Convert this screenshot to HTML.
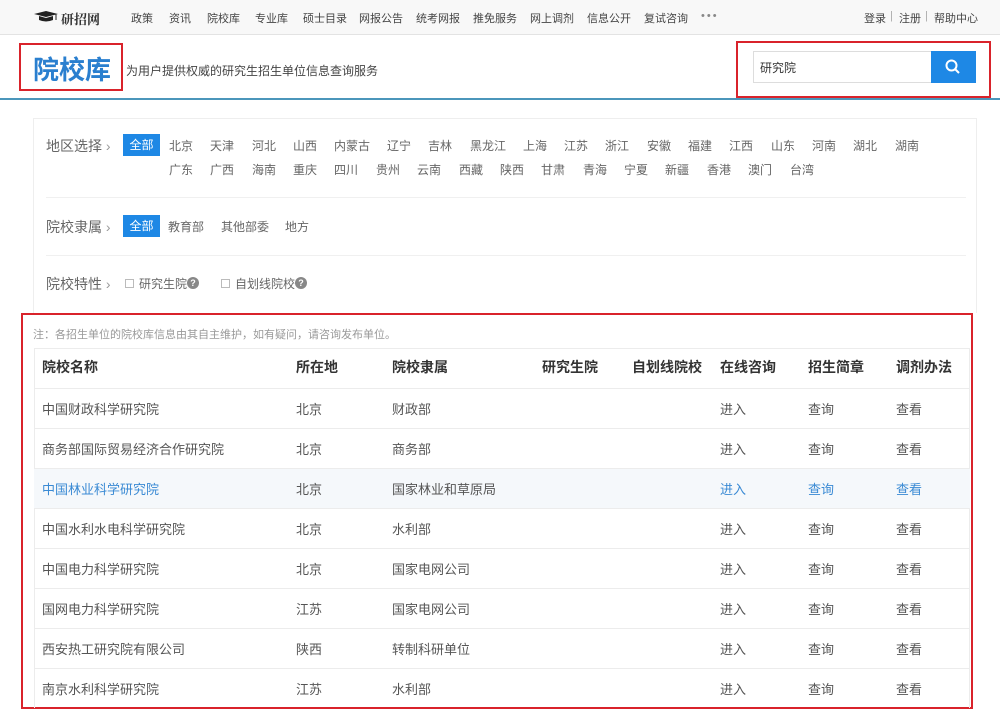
<!DOCTYPE html>
<html><head><meta charset="utf-8"><style>
*{margin:0;padding:0;box-sizing:border-box}
body{width:1000px;height:712px;overflow:hidden;background:#fff;font-family:"Liberation Sans","Noto Sans CJK SC",sans-serif;color:#333;position:relative}
.a{position:absolute;white-space:nowrap}
.nav{left:0;top:0;width:1000px;height:35px;background:#f8f8f8;border-bottom:1px solid #e3e3e3}
.nav span{position:absolute;top:10px;font-size:11px;color:#444}
.red{border:2px solid #d9232b}
.f{font-size:12px;color:#666}
.lbl{font-size:14px;color:#666}
.btn{background:#1e88e5;color:#fff;font-size:12px;text-align:center;line-height:22px}
.row{left:34px;width:936px;height:40px;border-top:1px solid #ececec}
.row span{position:absolute;top:10px;font-size:13px;color:#555}
.hi{background:#f5f8fb}
.hi span.b{color:#3a8ad4}
</style></head><body>
<div class="a nav">
  <svg class="a" style="left:34px;top:11px" width="24" height="12" viewBox="0 0 24 12"><path d="M0 3 L12 0 L24 3 L12 6Z" fill="#222"/><path d="M5 5 L5 9 Q12 12 19 9 L19 5 L12 7Z" fill="#222"/><path d="M22 3.5 V9" stroke="#222" stroke-width="1"/></svg>
  <span style="left:61px;top:9px;font-size:13px;font-weight:bold;color:#333;font-family:'Noto Serif CJK SC',serif">研招网</span>
  <span style="left:131px">政策</span><span style="left:169px">资讯</span><span style="left:207px">院校库</span><span style="left:255px">专业库</span><span style="left:303px">硕士目录</span><span style="left:359px">网报公告</span><span style="left:416px">统考网报</span><span style="left:473px">推免服务</span><span style="left:530px">网上调剂</span><span style="left:587px">信息公开</span><span style="left:644px">复试咨询</span><span style="left:701px;letter-spacing:2px;color:#888">•••</span>
  <span style="left:864px">登录</span><span style="left:890px;color:#aaa;top:10px">|</span><span style="left:899px">注册</span><span style="left:925px;color:#aaa;top:10px">|</span><span style="left:934px">帮助中心</span>
</div>
<div class="a red" style="left:19px;top:43px;width:104px;height:48px"></div>
<div class="a" style="left:33px;top:50px;font-size:26px;font-weight:bold;color:#2a7fcf">院校库</div>
<div class="a f" style="left:126px;top:62px;color:#444">为用户提供权威的研究生招生单位信息查询服务</div>
<div class="a red" style="left:736px;top:41px;width:255px;height:57px"></div>
<div class="a" style="left:753px;top:51px;width:179px;height:32px;border:1px solid #ddd"></div>
<div class="a" style="left:760px;top:59px;font-size:12px">研究院</div>
<div class="a" style="left:931px;top:51px;width:45px;height:32px;background:#1e88e5"></div>
<svg class="a" style="left:945px;top:59px" width="16" height="16" viewBox="0 0 16 16"><circle cx="6.5" cy="6.5" r="5" fill="none" stroke="#fff" stroke-width="2"/><path d="M10 10 L14 14" stroke="#fff" stroke-width="2"/></svg>
<div class="a" style="left:0;top:98px;width:1000px;height:2px;background:#4b96bb"></div>

<div class="a" style="left:33px;top:118px;width:944px;height:195px;border:1px solid #eee;border-bottom:none"></div>
<div class="a lbl" style="left:46px;top:136px">地区选择 <span style="color:#999">›</span></div>
<div class="a btn" style="left:123px;top:134px;width:37px">全部</div>
<div class="a f" style="left:169px;top:137px">
<span class="a" style="left:0">北京</span><span class="a" style="left:41px">天津</span><span class="a" style="left:83px">河北</span><span class="a" style="left:124px">山西</span><span class="a" style="left:165px">内蒙古</span><span class="a" style="left:218px">辽宁</span><span class="a" style="left:259px">吉林</span><span class="a" style="left:301px">黑龙江</span><span class="a" style="left:354px">上海</span><span class="a" style="left:395px">江苏</span><span class="a" style="left:436px">浙江</span><span class="a" style="left:478px">安徽</span><span class="a" style="left:519px">福建</span><span class="a" style="left:560px">江西</span><span class="a" style="left:602px">山东</span><span class="a" style="left:643px">河南</span><span class="a" style="left:684px">湖北</span><span class="a" style="left:726px">湖南</span>
<span class="a" style="left:0;top:24px">广东</span><span class="a" style="left:41px;top:24px">广西</span><span class="a" style="left:83px;top:24px">海南</span><span class="a" style="left:124px;top:24px">重庆</span><span class="a" style="left:165px;top:24px">四川</span><span class="a" style="left:207px;top:24px">贵州</span><span class="a" style="left:248px;top:24px">云南</span><span class="a" style="left:290px;top:24px">西藏</span><span class="a" style="left:331px;top:24px">陕西</span><span class="a" style="left:372px;top:24px">甘肃</span><span class="a" style="left:414px;top:24px">青海</span><span class="a" style="left:455px;top:24px">宁夏</span><span class="a" style="left:496px;top:24px">新疆</span><span class="a" style="left:538px;top:24px">香港</span><span class="a" style="left:579px;top:24px">澳门</span><span class="a" style="left:621px;top:24px">台湾</span>
</div>
<div class="a" style="left:46px;top:197px;width:920px;height:1px;background:#f0f0f0"></div>
<div class="a lbl" style="left:46px;top:217px">院校隶属 <span style="color:#999">›</span></div>
<div class="a btn" style="left:123px;top:215px;width:37px">全部</div>
<div class="a f" style="left:168px;top:218px">教育部</div><div class="a f" style="left:221px;top:218px">其他部委</div><div class="a f" style="left:285px;top:218px">地方</div>
<div class="a" style="left:46px;top:255px;width:920px;height:1px;background:#f0f0f0"></div>
<div class="a lbl" style="left:46px;top:274px">院校特性 <span style="color:#999">›</span></div>
<div class="a" style="left:125px;top:279px;width:9px;height:9px;border:1px solid #bbb"></div>
<div class="a f" style="left:139px;top:275px">研究生院</div>
<div class="a" style="left:187px;top:277px;width:12px;height:12px;border-radius:50%;background:#888;color:#fff;font-size:9px;text-align:center;line-height:12px;font-weight:bold">?</div>
<div class="a" style="left:221px;top:279px;width:9px;height:9px;border:1px solid #bbb"></div>
<div class="a f" style="left:235px;top:275px">自划线院校</div>
<div class="a" style="left:295px;top:277px;width:12px;height:12px;border-radius:50%;background:#888;color:#fff;font-size:9px;text-align:center;line-height:12px;font-weight:bold">?</div>

<div class="a red" style="left:21px;top:313px;width:952px;height:396px"></div>
<div class="a" style="left:33px;top:326px;font-size:11px;color:#999">注：各招生单位的院校库信息由其自主维护，如有疑问，请咨询发布单位。</div>
<div class="a" style="left:34px;top:348px;width:936px;height:360px;border:1px solid #ececec;border-bottom:none"></div>
<div class="a row" style="top:348px;border-top:none"><span style="left:8px;top:9px;font-weight:bold;font-size:14px;color:#333">院校名称</span><span style="left:262px;top:9px;font-weight:bold;font-size:14px;color:#333">所在地</span><span style="left:358px;top:9px;font-weight:bold;font-size:14px;color:#333">院校隶属</span><span style="left:508px;top:9px;font-weight:bold;font-size:14px;color:#333">研究生院</span><span style="left:598px;top:9px;font-weight:bold;font-size:14px;color:#333">自划线院校</span><span style="left:686px;top:9px;font-weight:bold;font-size:14px;color:#333">在线咨询</span><span style="left:774px;top:9px;font-weight:bold;font-size:14px;color:#333">招生简章</span><span style="left:862px;top:9px;font-weight:bold;font-size:14px;color:#333">调剂办法</span></div>

<div class="a row" style="top:388px"><span style="left:8px">中国财政科学研究院</span><span style="left:262px">北京</span><span style="left:358px">财政部</span><span style="left:686px">进入</span><span style="left:774px">查询</span><span style="left:862px">查看</span></div>
<div class="a row" style="top:428px"><span style="left:8px">商务部国际贸易经济合作研究院</span><span style="left:262px">北京</span><span style="left:358px">商务部</span><span style="left:686px">进入</span><span style="left:774px">查询</span><span style="left:862px">查看</span></div>
<div class="a row hi" style="top:468px"><span class="b" style="left:8px">中国林业科学研究院</span><span style="left:262px">北京</span><span style="left:358px">国家林业和草原局</span><span class="b" style="left:686px">进入</span><span class="b" style="left:774px">查询</span><span class="b" style="left:862px">查看</span></div>
<div class="a row" style="top:508px"><span style="left:8px">中国水利水电科学研究院</span><span style="left:262px">北京</span><span style="left:358px">水利部</span><span style="left:686px">进入</span><span style="left:774px">查询</span><span style="left:862px">查看</span></div>
<div class="a row" style="top:548px"><span style="left:8px">中国电力科学研究院</span><span style="left:262px">北京</span><span style="left:358px">国家电网公司</span><span style="left:686px">进入</span><span style="left:774px">查询</span><span style="left:862px">查看</span></div>
<div class="a row" style="top:588px"><span style="left:8px">国网电力科学研究院</span><span style="left:262px">江苏</span><span style="left:358px">国家电网公司</span><span style="left:686px">进入</span><span style="left:774px">查询</span><span style="left:862px">查看</span></div>
<div class="a row" style="top:628px"><span style="left:8px">西安热工研究院有限公司</span><span style="left:262px">陕西</span><span style="left:358px">转制科研单位</span><span style="left:686px">进入</span><span style="left:774px">查询</span><span style="left:862px">查看</span></div>
<div class="a row" style="top:668px"><span style="left:8px">南京水利科学研究院</span><span style="left:262px">江苏</span><span style="left:358px">水利部</span><span style="left:686px">进入</span><span style="left:774px">查询</span><span style="left:862px">查看</span></div>
</body></html>
